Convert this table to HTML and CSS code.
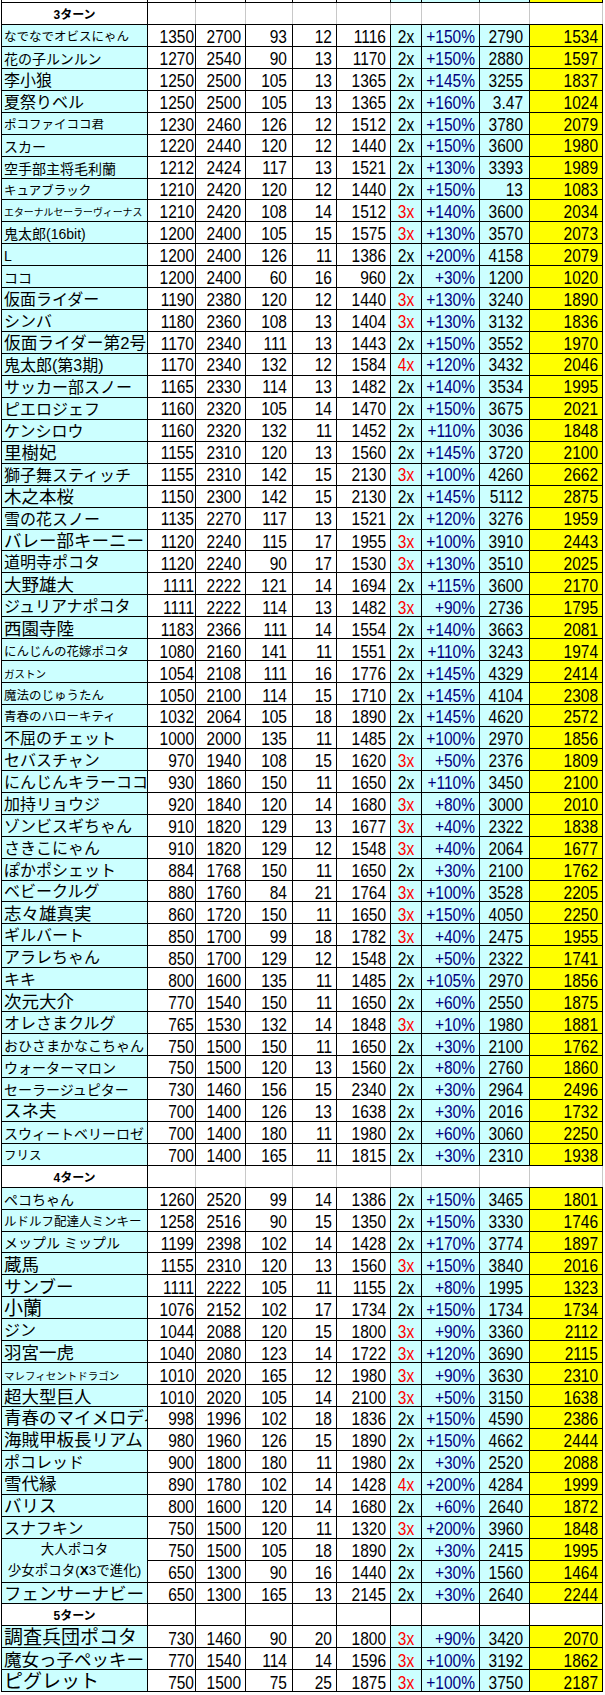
FILE: index.html
```html
<!DOCTYPE html>
<html lang="ja">
<head>
<meta charset="utf-8">
<title>ターン表</title>
<link rel="stylesheet" href="styles.css">
</head>
<body>
<table class="sheet">
<colgroup>
<col class="c1"><col class="c2"><col class="c3"><col class="c4"><col class="c5"><col class="c6"><col class="c7"><col class="c8"><col class="c9"><col class="c10">
</colgroup>
<tbody>
<tr class="top"><td></td><td></td><td></td><td></td><td></td><td></td><td></td><td></td><td></td><td></td></tr>
<tr class="h"><th>3ターン</th><td></td><td></td><td></td><td></td><td></td><td></td><td></td><td></td><td></td></tr>
<tr><td class="n m">なでなでオビスにゃん</td><td><span>1350</span></td><td><span>2700</span></td><td><span>93</span></td><td><span>12</span></td><td><span>1116</span></td><td><span>2x</span></td><td><span>+150%</span></td><td><span>2790</span></td><td><span>1534</span></td></tr>
<tr><td class="n ml">花の子ルンルン</td><td><span>1270</span></td><td><span>2540</span></td><td><span>90</span></td><td><span>13</span></td><td><span>1170</span></td><td><span>2x</span></td><td><span>+150%</span></td><td><span>2880</span></td><td><span>1597</span></td></tr>
<tr><td class="n l">李小狼</td><td><span>1250</span></td><td><span>2500</span></td><td><span>105</span></td><td><span>13</span></td><td><span>1365</span></td><td><span>2x</span></td><td><span>+145%</span></td><td><span>3255</span></td><td><span>1837</span></td></tr>
<tr><td class="n l">夏祭りベル</td><td><span>1250</span></td><td><span>2500</span></td><td><span>105</span></td><td><span>13</span></td><td><span>1365</span></td><td><span>2x</span></td><td><span>+160%</span></td><td><span>3.47</span></td><td><span>1024</span></td></tr>
<tr><td class="n m">ポコファイココ君</td><td><span>1230</span></td><td><span>2460</span></td><td><span>126</span></td><td><span>12</span></td><td><span>1512</span></td><td><span>2x</span></td><td><span>+150%</span></td><td><span>3780</span></td><td><span>2079</span></td></tr>
<tr><td class="n ml">スカー</td><td><span>1220</span></td><td><span>2440</span></td><td><span>120</span></td><td><span>12</span></td><td><span>1440</span></td><td><span>2x</span></td><td><span>+150%</span></td><td><span>3600</span></td><td><span>1980</span></td></tr>
<tr><td class="n ml">空手部主将毛利蘭</td><td><span>1212</span></td><td><span>2424</span></td><td><span>117</span></td><td><span>13</span></td><td><span>1521</span></td><td><span>2x</span></td><td><span>+130%</span></td><td><span>3393</span></td><td><span>1989</span></td></tr>
<tr><td class="n m">キュアブラック</td><td><span>1210</span></td><td><span>2420</span></td><td><span>120</span></td><td><span>12</span></td><td><span>1440</span></td><td><span>2x</span></td><td><span>+150%</span></td><td><span>13</span></td><td><span>1083</span></td></tr>
<tr><td class="n xs">エターナルセーラーヴィーナス</td><td><span>1210</span></td><td><span>2420</span></td><td><span>108</span></td><td><span>14</span></td><td><span>1512</span></td><td class="r"><span>3x</span></td><td><span>+140%</span></td><td><span>3600</span></td><td><span>2034</span></td></tr>
<tr><td class="n ml">鬼太郎(16bit)</td><td><span>1200</span></td><td><span>2400</span></td><td><span>105</span></td><td><span>15</span></td><td><span>1575</span></td><td class="r"><span>3x</span></td><td><span>+130%</span></td><td><span>3570</span></td><td><span>2073</span></td></tr>
<tr><td class="n ml">L</td><td><span>1200</span></td><td><span>2400</span></td><td><span>126</span></td><td><span>11</span></td><td><span>1386</span></td><td><span>2x</span></td><td><span>+200%</span></td><td><span>4158</span></td><td><span>2079</span></td></tr>
<tr><td class="n ml">ココ</td><td><span>1200</span></td><td><span>2400</span></td><td><span>60</span></td><td><span>16</span></td><td><span>960</span></td><td><span>2x</span></td><td><span>+30%</span></td><td><span>1200</span></td><td><span>1020</span></td></tr>
<tr><td class="n l">仮面ライダー</td><td><span>1190</span></td><td><span>2380</span></td><td><span>120</span></td><td><span>12</span></td><td><span>1440</span></td><td class="r"><span>3x</span></td><td><span>+130%</span></td><td><span>3240</span></td><td><span>1890</span></td></tr>
<tr><td class="n l">シンバ</td><td><span>1180</span></td><td><span>2360</span></td><td><span>108</span></td><td><span>13</span></td><td><span>1404</span></td><td class="r"><span>3x</span></td><td><span>+130%</span></td><td><span>3132</span></td><td><span>1836</span></td></tr>
<tr><td class="n xl fit">仮面ライダー第2号</td><td><span>1170</span></td><td><span>2340</span></td><td><span>111</span></td><td><span>13</span></td><td><span>1443</span></td><td><span>2x</span></td><td><span>+150%</span></td><td><span>3552</span></td><td><span>1970</span></td></tr>
<tr><td class="n l">鬼太郎(第3期)</td><td><span>1170</span></td><td><span>2340</span></td><td><span>132</span></td><td><span>12</span></td><td><span>1584</span></td><td class="r"><span>4x</span></td><td><span>+120%</span></td><td><span>3432</span></td><td><span>2046</span></td></tr>
<tr><td class="n l">サッカー部スノー</td><td><span>1165</span></td><td><span>2330</span></td><td><span>114</span></td><td><span>13</span></td><td><span>1482</span></td><td><span>2x</span></td><td><span>+140%</span></td><td><span>3534</span></td><td><span>1995</span></td></tr>
<tr><td class="n l">ピエロジェフ</td><td><span>1160</span></td><td><span>2320</span></td><td><span>105</span></td><td><span>14</span></td><td><span>1470</span></td><td><span>2x</span></td><td><span>+150%</span></td><td><span>3675</span></td><td><span>2021</span></td></tr>
<tr><td class="n l">ケンシロウ</td><td><span>1160</span></td><td><span>2320</span></td><td><span>132</span></td><td><span>11</span></td><td><span>1452</span></td><td><span>2x</span></td><td><span>+110%</span></td><td><span>3036</span></td><td><span>1848</span></td></tr>
<tr><td class="n xl">里樹妃</td><td><span>1155</span></td><td><span>2310</span></td><td><span>120</span></td><td><span>13</span></td><td><span>1560</span></td><td><span>2x</span></td><td><span>+145%</span></td><td><span>3720</span></td><td><span>2100</span></td></tr>
<tr><td class="n l">獅子舞スティッチ</td><td><span>1155</span></td><td><span>2310</span></td><td><span>142</span></td><td><span>15</span></td><td><span>2130</span></td><td class="r"><span>3x</span></td><td><span>+100%</span></td><td><span>4260</span></td><td><span>2662</span></td></tr>
<tr><td class="n xl">木之本桜</td><td><span>1150</span></td><td><span>2300</span></td><td><span>142</span></td><td><span>15</span></td><td><span>2130</span></td><td><span>2x</span></td><td><span>+145%</span></td><td><span>5112</span></td><td><span>2875</span></td></tr>
<tr><td class="n l">雪の花スノー</td><td><span>1135</span></td><td><span>2270</span></td><td><span>117</span></td><td><span>13</span></td><td><span>1521</span></td><td><span>2x</span></td><td><span>+120%</span></td><td><span>3276</span></td><td><span>1959</span></td></tr>
<tr><td class="n xl">バレー部キーニー</td><td><span>1120</span></td><td><span>2240</span></td><td><span>115</span></td><td><span>17</span></td><td><span>1955</span></td><td class="r"><span>3x</span></td><td><span>+100%</span></td><td><span>3910</span></td><td><span>2443</span></td></tr>
<tr><td class="n l">道明寺ポコタ</td><td><span>1120</span></td><td><span>2240</span></td><td><span>90</span></td><td><span>17</span></td><td><span>1530</span></td><td class="r"><span>3x</span></td><td><span>+130%</span></td><td><span>3510</span></td><td><span>2025</span></td></tr>
<tr><td class="n xl">大野雄大</td><td><span>1111</span></td><td><span>2222</span></td><td><span>121</span></td><td><span>14</span></td><td><span>1694</span></td><td><span>2x</span></td><td><span>+115%</span></td><td><span>3600</span></td><td><span>2170</span></td></tr>
<tr><td class="n l">ジュリアナポコタ</td><td><span>1111</span></td><td><span>2222</span></td><td><span>114</span></td><td><span>13</span></td><td><span>1482</span></td><td class="r"><span>3x</span></td><td><span>+90%</span></td><td><span>2736</span></td><td><span>1795</span></td></tr>
<tr><td class="n xl">西園寺陸</td><td><span>1183</span></td><td><span>2366</span></td><td><span>111</span></td><td><span>14</span></td><td><span>1554</span></td><td><span>2x</span></td><td><span>+140%</span></td><td><span>3663</span></td><td><span>2081</span></td></tr>
<tr><td class="n m">にんじんの花嫁ポコタ</td><td><span>1080</span></td><td><span>2160</span></td><td><span>141</span></td><td><span>11</span></td><td><span>1551</span></td><td><span>2x</span></td><td><span>+110%</span></td><td><span>3243</span></td><td><span>1974</span></td></tr>
<tr><td class="n s">ガストン</td><td><span>1054</span></td><td><span>2108</span></td><td><span>111</span></td><td><span>16</span></td><td><span>1776</span></td><td><span>2x</span></td><td><span>+145%</span></td><td><span>4329</span></td><td><span>2414</span></td></tr>
<tr><td class="n m">魔法のじゅうたん</td><td><span>1050</span></td><td><span>2100</span></td><td><span>114</span></td><td><span>15</span></td><td><span>1710</span></td><td><span>2x</span></td><td><span>+145%</span></td><td><span>4104</span></td><td><span>2308</span></td></tr>
<tr><td class="n m">青春のハローキティ</td><td><span>1032</span></td><td><span>2064</span></td><td><span>105</span></td><td><span>18</span></td><td><span>1890</span></td><td><span>2x</span></td><td><span>+145%</span></td><td><span>4620</span></td><td><span>2572</span></td></tr>
<tr><td class="n l">不屈のチェット</td><td><span>1000</span></td><td><span>2000</span></td><td><span>135</span></td><td><span>11</span></td><td><span>1485</span></td><td><span>2x</span></td><td><span>+100%</span></td><td><span>2970</span></td><td><span>1856</span></td></tr>
<tr><td class="n l">セバスチャン</td><td><span>970</span></td><td><span>1940</span></td><td><span>108</span></td><td><span>15</span></td><td><span>1620</span></td><td class="r"><span>3x</span></td><td><span>+50%</span></td><td><span>2376</span></td><td><span>1809</span></td></tr>
<tr><td class="n l">にんじんキラーココ</td><td><span>930</span></td><td><span>1860</span></td><td><span>150</span></td><td><span>11</span></td><td><span>1650</span></td><td><span>2x</span></td><td><span>+110%</span></td><td><span>3450</span></td><td><span>2100</span></td></tr>
<tr><td class="n l">加持リョウジ</td><td><span>920</span></td><td><span>1840</span></td><td><span>120</span></td><td><span>14</span></td><td><span>1680</span></td><td class="r"><span>3x</span></td><td><span>+80%</span></td><td><span>3000</span></td><td><span>2010</span></td></tr>
<tr><td class="n l">ゾンビスギちゃん</td><td><span>910</span></td><td><span>1820</span></td><td><span>129</span></td><td><span>13</span></td><td><span>1677</span></td><td class="r"><span>3x</span></td><td><span>+40%</span></td><td><span>2322</span></td><td><span>1838</span></td></tr>
<tr><td class="n l">さきこにゃん</td><td><span>910</span></td><td><span>1820</span></td><td><span>129</span></td><td><span>12</span></td><td><span>1548</span></td><td class="r"><span>3x</span></td><td><span>+40%</span></td><td><span>2064</span></td><td><span>1677</span></td></tr>
<tr><td class="n l">ぽかポシェット</td><td><span>884</span></td><td><span>1768</span></td><td><span>150</span></td><td><span>11</span></td><td><span>1650</span></td><td><span>2x</span></td><td><span>+30%</span></td><td><span>2100</span></td><td><span>1762</span></td></tr>
<tr><td class="n l">ベビークルグ</td><td><span>880</span></td><td><span>1760</span></td><td><span>84</span></td><td><span>21</span></td><td><span>1764</span></td><td class="r"><span>3x</span></td><td><span>+100%</span></td><td><span>3528</span></td><td><span>2205</span></td></tr>
<tr><td class="n xl">志々雄真実</td><td><span>860</span></td><td><span>1720</span></td><td><span>150</span></td><td><span>11</span></td><td><span>1650</span></td><td class="r"><span>3x</span></td><td><span>+150%</span></td><td><span>4050</span></td><td><span>2250</span></td></tr>
<tr><td class="n l">ギルバート</td><td><span>850</span></td><td><span>1700</span></td><td><span>99</span></td><td><span>18</span></td><td><span>1782</span></td><td class="r"><span>3x</span></td><td><span>+40%</span></td><td><span>2475</span></td><td><span>1955</span></td></tr>
<tr><td class="n l">アラレちゃん</td><td><span>850</span></td><td><span>1700</span></td><td><span>129</span></td><td><span>12</span></td><td><span>1548</span></td><td><span>2x</span></td><td><span>+50%</span></td><td><span>2322</span></td><td><span>1741</span></td></tr>
<tr><td class="n l">キキ</td><td><span>800</span></td><td><span>1600</span></td><td><span>135</span></td><td><span>11</span></td><td><span>1485</span></td><td><span>2x</span></td><td><span>+105%</span></td><td><span>2970</span></td><td><span>1856</span></td></tr>
<tr><td class="n xl">次元大介</td><td><span>770</span></td><td><span>1540</span></td><td><span>150</span></td><td><span>11</span></td><td><span>1650</span></td><td><span>2x</span></td><td><span>+60%</span></td><td><span>2550</span></td><td><span>1875</span></td></tr>
<tr><td class="n l">オレさまクルグ</td><td><span>765</span></td><td><span>1530</span></td><td><span>132</span></td><td><span>14</span></td><td><span>1848</span></td><td class="r"><span>3x</span></td><td><span>+10%</span></td><td><span>1980</span></td><td><span>1881</span></td></tr>
<tr><td class="n ml">おひさまかなこちゃん</td><td><span>750</span></td><td><span>1500</span></td><td><span>150</span></td><td><span>11</span></td><td><span>1650</span></td><td><span>2x</span></td><td><span>+30%</span></td><td><span>2100</span></td><td><span>1762</span></td></tr>
<tr><td class="n ml">ウォーターマロン</td><td><span>750</span></td><td><span>1500</span></td><td><span>120</span></td><td><span>13</span></td><td><span>1560</span></td><td><span>2x</span></td><td><span>+80%</span></td><td><span>2760</span></td><td><span>1860</span></td></tr>
<tr><td class="n ml">セーラージュピター</td><td><span>730</span></td><td><span>1460</span></td><td><span>156</span></td><td><span>15</span></td><td><span>2340</span></td><td><span>2x</span></td><td><span>+30%</span></td><td><span>2964</span></td><td><span>2496</span></td></tr>
<tr><td class="n xl">スネ夫</td><td><span>700</span></td><td><span>1400</span></td><td><span>126</span></td><td><span>13</span></td><td><span>1638</span></td><td><span>2x</span></td><td><span>+30%</span></td><td><span>2016</span></td><td><span>1732</span></td></tr>
<tr><td class="n ml">スウィートベリーロゼ</td><td><span>700</span></td><td><span>1400</span></td><td><span>180</span></td><td><span>11</span></td><td><span>1980</span></td><td><span>2x</span></td><td><span>+60%</span></td><td><span>3060</span></td><td><span>2250</span></td></tr>
<tr><td class="n m">フリス</td><td><span>700</span></td><td><span>1400</span></td><td><span>165</span></td><td><span>11</span></td><td><span>1815</span></td><td><span>2x</span></td><td><span>+30%</span></td><td><span>2310</span></td><td><span>1938</span></td></tr>
<tr class="h"><th>4ターン</th><td></td><td></td><td></td><td></td><td></td><td></td><td></td><td></td><td></td></tr>
<tr><td class="n ml">ペコちゃん</td><td><span>1260</span></td><td><span>2520</span></td><td><span>99</span></td><td><span>14</span></td><td><span>1386</span></td><td><span>2x</span></td><td><span>+150%</span></td><td><span>3465</span></td><td><span>1801</span></td></tr>
<tr><td class="n m">ルドルフ配達人ミンキー</td><td><span>1258</span></td><td><span>2516</span></td><td><span>90</span></td><td><span>15</span></td><td><span>1350</span></td><td><span>2x</span></td><td><span>+150%</span></td><td><span>3330</span></td><td><span>1746</span></td></tr>
<tr><td class="n ml">メップル ミップル</td><td><span>1199</span></td><td><span>2398</span></td><td><span>102</span></td><td><span>14</span></td><td><span>1428</span></td><td><span>2x</span></td><td><span>+170%</span></td><td><span>3774</span></td><td><span>1897</span></td></tr>
<tr><td class="n xl">蔵馬</td><td><span>1155</span></td><td><span>2310</span></td><td><span>120</span></td><td><span>13</span></td><td><span>1560</span></td><td class="r"><span>3x</span></td><td><span>+150%</span></td><td><span>3840</span></td><td><span>2016</span></td></tr>
<tr><td class="n xl">サンブー</td><td><span>1111</span></td><td><span>2222</span></td><td><span>105</span></td><td><span>11</span></td><td><span>1155</span></td><td><span>2x</span></td><td><span>+80%</span></td><td><span>1995</span></td><td><span>1323</span></td></tr>
<tr><td class="n xxl">小蘭</td><td><span>1076</span></td><td><span>2152</span></td><td><span>102</span></td><td><span>17</span></td><td><span>1734</span></td><td><span>2x</span></td><td><span>+150%</span></td><td><span>1734</span></td><td><span>1734</span></td></tr>
<tr><td class="n l">ジン</td><td><span>1044</span></td><td><span>2088</span></td><td><span>120</span></td><td><span>15</span></td><td><span>1800</span></td><td class="r"><span>3x</span></td><td><span>+90%</span></td><td><span>3360</span></td><td><span>2112</span></td></tr>
<tr><td class="n xl">羽宮一虎</td><td><span>1040</span></td><td><span>2080</span></td><td><span>123</span></td><td><span>14</span></td><td><span>1722</span></td><td class="r"><span>3x</span></td><td><span>+120%</span></td><td><span>3690</span></td><td><span>2115</span></td></tr>
<tr><td class="n s">マレフィセントドラゴン</td><td><span>1010</span></td><td><span>2020</span></td><td><span>165</span></td><td><span>12</span></td><td><span>1980</span></td><td class="r"><span>3x</span></td><td><span>+90%</span></td><td><span>3630</span></td><td><span>2310</span></td></tr>
<tr><td class="n xl">超大型巨人</td><td><span>1010</span></td><td><span>2020</span></td><td><span>105</span></td><td><span>14</span></td><td><span>2100</span></td><td class="r"><span>3x</span></td><td><span>+50%</span></td><td><span>3150</span></td><td><span>1638</span></td></tr>
<tr><td class="n xl">青春のマイメロディ</td><td><span>998</span></td><td><span>1996</span></td><td><span>102</span></td><td><span>18</span></td><td><span>1836</span></td><td><span>2x</span></td><td><span>+150%</span></td><td><span>4590</span></td><td><span>2386</span></td></tr>
<tr><td class="n xl">海賊甲板長リアム</td><td><span>980</span></td><td><span>1960</span></td><td><span>126</span></td><td><span>15</span></td><td><span>1890</span></td><td><span>2x</span></td><td><span>+150%</span></td><td><span>4662</span></td><td><span>2444</span></td></tr>
<tr><td class="n l">ポコレッド</td><td><span>900</span></td><td><span>1800</span></td><td><span>180</span></td><td><span>11</span></td><td><span>1980</span></td><td><span>2x</span></td><td><span>+30%</span></td><td><span>2520</span></td><td><span>2088</span></td></tr>
<tr><td class="n xl">雪代縁</td><td><span>890</span></td><td><span>1780</span></td><td><span>102</span></td><td><span>14</span></td><td><span>1428</span></td><td class="r"><span>4x</span></td><td><span>+200%</span></td><td><span>4284</span></td><td><span>1999</span></td></tr>
<tr><td class="n xl">バリス</td><td><span>800</span></td><td><span>1600</span></td><td><span>120</span></td><td><span>14</span></td><td><span>1680</span></td><td><span>2x</span></td><td><span>+60%</span></td><td><span>2640</span></td><td><span>1872</span></td></tr>
<tr><td class="n l">スナフキン</td><td><span>750</span></td><td><span>1500</span></td><td><span>120</span></td><td><span>11</span></td><td><span>1320</span></td><td class="r"><span>3x</span></td><td><span>+200%</span></td><td><span>3960</span></td><td><span>1848</span></td></tr>
<tr><td class="n mg" rowspan="2"><div>大人ポコタ</div><div>少女ポコタ(<b>X</b>3で進化)</div></td><td><span>750</span></td><td><span>1500</span></td><td><span>105</span></td><td><span>18</span></td><td><span>1890</span></td><td><span>2x</span></td><td><span>+30%</span></td><td><span>2415</span></td><td><span>1995</span></td></tr>
<tr><td><span>650</span></td><td><span>1300</span></td><td><span>90</span></td><td><span>16</span></td><td><span>1440</span></td><td><span>2x</span></td><td><span>+30%</span></td><td><span>1560</span></td><td><span>1464</span></td></tr>
<tr><td class="n xl">フェンサーナビー</td><td><span>650</span></td><td><span>1300</span></td><td><span>165</span></td><td><span>13</span></td><td><span>2145</span></td><td><span>2x</span></td><td><span>+30%</span></td><td><span>2640</span></td><td><span>2244</span></td></tr>
<tr class="h h5"><th>5ターン</th><td></td><td></td><td></td><td></td><td></td><td></td><td></td><td></td><td></td></tr>
<tr><td class="n xxl">調査兵団ポコタ</td><td><span>730</span></td><td><span>1460</span></td><td><span>90</span></td><td><span>20</span></td><td><span>1800</span></td><td class="r"><span>3x</span></td><td><span>+90%</span></td><td><span>3420</span></td><td><span>2070</span></td></tr>
<tr><td class="n xl">魔女っ子ペッキー</td><td><span>770</span></td><td><span>1540</span></td><td><span>114</span></td><td><span>14</span></td><td><span>1596</span></td><td class="r"><span>3x</span></td><td><span>+100%</span></td><td><span>3192</span></td><td><span>1862</span></td></tr>
<tr><td class="n xxl">ピグレット</td><td><span>750</span></td><td><span>1500</span></td><td><span>75</span></td><td><span>25</span></td><td><span>1875</span></td><td class="r"><span>3x</span></td><td><span>+100%</span></td><td><span>3750</span></td><td><span>2187</span></td></tr>
</tbody>
</table>
</body>
</html>
```
FILE: styles.css
```css
html, body {
  margin: 0;
  padding: 0;
  background: #ffffff;
}

.sheet {
  border-collapse: collapse;
  table-layout: fixed;
  width: 602px;
  margin: 0 0 0 1px;
  font-family: "Liberation Sans", "Noto Sans CJK JP", sans-serif;
  font-size: 15.5px;
  color: #000000;
}

.c1 { width: 146px; }
.c2 { width: 48px; }
.c3 { width: 50px; }
.c4 { width: 47px; }
.c5 { width: 44px; }
.c6 { width: 54px; }
.c7 { width: 31px; }
.c8 { width: 58px; }
.c9 { width: 50px; }
.c10 { width: 73px; }

.sheet tr {
  height: 21.95px;
}

.sheet td,
.sheet th {
  border: 1px solid #000000;
  padding: 0 4px 0 0;
  line-height: 1;
  vertical-align: bottom;
  text-align: right;
  white-space: nowrap;
  font-weight: normal;
}

/* numbers are drawn a little taller than wide, like the sheet's font */
.sheet td span {
  display: inline-block;
  transform: scaleY(1.2);
  transform-origin: 50% 100%;
}

/* column formats, counted from the right edge */
.sheet td:nth-last-child(9) { padding-right: 1px; }
.sheet td:nth-last-child(7) { padding-right: 5px; }
.sheet td:nth-last-child(4) {
  background: #ccffff;
  text-align: center;
  padding-right: 0;
}
.sheet td:nth-last-child(3) {
  background: #ccffff;
  color: #000080;
}
.sheet td:nth-last-child(2) {
  background: #ccffff;
  padding-right: 6px;
}
.sheet td:nth-last-child(1) {
  background: #ffff00;
}

.sheet td.r { color: #ff0000; }

/* name column */
.sheet td.n {
  background: #ccffff;
  text-align: left;
  padding: 0 0 1px 2px;
  color: #000000;
  overflow: hidden;
}
.sheet td.xs { font-size: 9.9px; padding-bottom: 3px; }
.sheet td.s { font-size: 10.5px; padding-bottom: 3px; }
.sheet td.m { font-size: 12.5px; padding-bottom: 2px; }
.sheet td.ml { font-size: 14px; padding-bottom: 2px; }
.sheet td.l { font-size: 16px; }
.sheet td.xl { font-size: 17.5px; padding-bottom: 0; }
.sheet td.xl.fit { font-size: 16.7px; }
.sheet td.xxl { font-size: 19px; padding-bottom: 0; }

.sheet td.mg {
  text-align: center;
  vertical-align: middle;
  font-size: 13.5px;
  line-height: 21px;
  padding: 0;
}
.sheet td.mg b { font-weight: bold; }

/* section header rows */
.sheet .h th {
  background: #ffffff;
  font-weight: bold;
  font-size: 12px;
  text-align: center;
  padding: 0 0 3px 0;
}
.sheet .h td {
  background: #ffffff;
  border-left-color: #c8c8c8;
  border-right-color: #c8c8c8;
}
.sheet .h5 td {
  border-left-color: #000000;
  border-right-color: #000000;
}

/* sliver of the row above the first section */
.sheet tr.top { height: 2px; }
.sheet .top td {
  border-top: 0;
  padding: 0;
  height: 2px;
  line-height: 0;
  font-size: 0;
}
```
